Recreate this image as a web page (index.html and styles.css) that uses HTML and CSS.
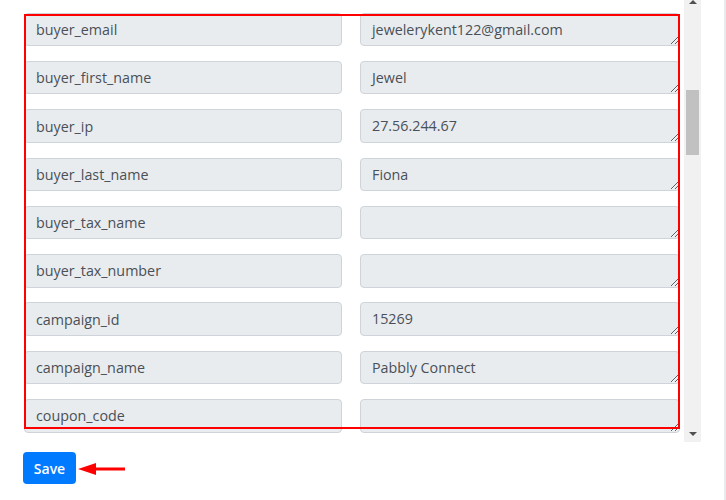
FILE: index.html
```html
<!DOCTYPE html>
<html>
<head>
<meta charset="utf-8">
<link rel="stylesheet" href="styles.css">
</head>
<body>
<div class="page">
  <div class="frame">
    <div class="viewport">
      <div class="rows">
        <div class="row"><input class="key" readonly value="buyer_email"><textarea class="val" readonly>jewelerykent122@gmail.com</textarea></div>
        <div class="row"><input class="key" readonly value="buyer_first_name"><textarea class="val" readonly>Jewel</textarea></div>
        <div class="row"><input class="key" readonly value="buyer_ip"><textarea class="val" readonly>27.56.244.67</textarea></div>
        <div class="row"><input class="key" readonly value="buyer_last_name"><textarea class="val" readonly>Fiona</textarea></div>
        <div class="row"><input class="key" readonly value="buyer_tax_name"><textarea class="val" readonly></textarea></div>
        <div class="row"><input class="key" readonly value="buyer_tax_number"><textarea class="val" readonly></textarea></div>
        <div class="row"><input class="key" readonly value="campaign_id"><textarea class="val" readonly>15269</textarea></div>
        <div class="row"><input class="key" readonly value="campaign_name"><textarea class="val" readonly>Pabbly Connect</textarea></div>
        <div class="row"><input class="key" readonly value="coupon_code"><textarea class="val" readonly></textarea></div>
      </div>
      <div class="highlight"></div>
    </div>
    <div class="scrollbar">
      <div class="arrow-up"></div>
      <div class="thumb"></div>
      <div class="arrow-down"></div>
    </div>
  </div>
  <div class="actions">
    <button class="save">Save</button>
    <svg class="pointer" width="48" height="14" viewBox="0 0 48 14">
      <polygon points="0,7 18,1 18,13" fill="#f00"/>
      <rect x="14" y="5.5" width="33" height="3" fill="#f00"/>
    </svg>
  </div>
</div>
</body>
</html>
```

FILE: styles.css
```css
html, body {
  margin: 0;
  padding: 0;
  background: #fff;
}
.page {
  width: 724px;
  height: 500px;
  border-right: 2px solid #e9ecef;
  font-family: "Open Sans", "Liberation Sans", sans-serif;
}
.frame {
  display: flex;
  height: 442px;
}
.viewport {
  position: relative;
  width: 684px;
  height: 442px;
  overflow: hidden;
}
.rows {
  display: flex;
  flex-direction: column;
  gap: 14.8px;
  padding: 12.7px 0 0 24px;
}
.row {
  display: flex;
  gap: 18px;
}
.key, .val {
  box-sizing: border-box;
  height: 33.5px;
  margin: 0;
  padding: 5px 11px;
  font-family: "Open Sans", "Liberation Sans", sans-serif;
  font-size: 14.3px;
  line-height: 21px;
  color: #495057;
  background: #e9ecef;
  border: 1px solid #ced4da;
  border-radius: 4px;
  outline: none;
}
.key {
  width: 318px;
}
.val {
  width: 320px;
  resize: vertical;
  overflow: hidden;
  display: block;
}
.highlight {
  position: absolute;
  left: 24px;
  top: 14px;
  width: 656px;
  height: 415px;
  box-sizing: border-box;
  border: 2px solid #f00;
  pointer-events: none;
}
.scrollbar {
  width: 17px;
  height: 442px;
  background: #f1f1f1;
  display: flex;
  flex-direction: column;
  align-items: center;
}
.arrow-up {
  width: 0;
  height: 0;
  border-left: 4px solid transparent;
  border-right: 4px solid transparent;
  border-bottom: 4px solid #505050;
}
.thumb {
  width: 13px;
  height: 65px;
  background: #c1c1c1;
  margin-top: 86px;
}
.arrow-down {
  width: 0;
  height: 0;
  border-left: 4px solid transparent;
  border-right: 4px solid transparent;
  border-top: 4px solid #505050;
  margin-top: auto;
  margin-bottom: 6px;
}
.actions {
  display: flex;
  align-items: center;
  gap: 2px;
  padding: 10px 0 0 23px;
}
.save {
  box-sizing: border-box;
  width: 53px;
  height: 32px;
  padding: 0;
  background: #007bff;
  color: #fff;
  border: none;
  border-radius: 4px;
  font-family: "Open Sans", "Liberation Sans", sans-serif;
  font-size: 14px;
  font-weight: 600;
}
.pointer {
  display: block;
  margin-top: 2px;
}
```
